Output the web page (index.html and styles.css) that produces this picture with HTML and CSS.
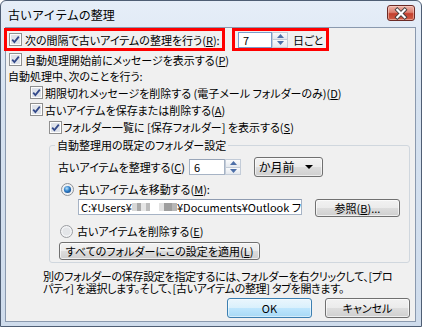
FILE: index.html
```html
<!DOCTYPE html>
<html lang="ja">
<head>
<meta charset="utf-8">
<link rel="stylesheet" href="styles.css">
</head>
<body>
<div class="window">
  <div class="titlebar">
    <span class="title">古いアイテムの整理</span>
    <div class="close">
      <svg width="28" height="15" viewBox="0 0 28 15">
        <path d="M10 3.5 L18 11.5 M18 3.5 L10 11.5" stroke="#3a3a3a" stroke-width="4.2" stroke-linecap="square"/>
        <path d="M10 3.5 L18 11.5 M18 3.5 L10 11.5" stroke="#ffffff" stroke-width="2.4" stroke-linecap="square"/>
      </svg>
    </div>
  </div>
  <div class="client">
    <div class="row-top">
      <div class="hl hl-check">
        <span class="cb"><svg width="13" height="13" viewBox="0 0 13 13"><rect x=".5" y=".5" width="12" height="12" fill="#fdfdfd" stroke="#8f8f8f"/><rect x="2" y="2" width="9" height="9" fill="#dfe3ea"/><path d="M3.2 6.6 L5.4 9 L9.8 3.6" fill="none" stroke="#33498a" stroke-width="1.8"/></svg></span>
        <span class="txt">次の間隔で古いアイテムの整理を行う(<u>R</u>):</span>
      </div>
      <div class="hl hl-spin">
        <div class="spin">
          <span class="field focus w-7">7</span>
          <span class="spinbtns">
            <span class="sb"><svg width="7" height="4" viewBox="0 0 7 4"><path d="M0 4 L3.5 0 L7 4Z" fill="#4d6fa8"/></svg></span>
            <span class="sb"><svg width="7" height="4" viewBox="0 0 7 4"><path d="M0 0 L3.5 4 L7 0Z" fill="#4d6fa8"/></svg></span>
          </span>
        </div>
        <span class="unit">日ごと</span>
      </div>
    </div>

    <div class="row r2">
      <span class="cb"><svg width="13" height="13" viewBox="0 0 13 13"><rect x=".5" y=".5" width="12" height="12" fill="#fdfdfd" stroke="#8f8f8f"/><rect x="2" y="2" width="9" height="9" fill="#dfe3ea"/><path d="M3.2 6.6 L5.4 9 L9.8 3.6" fill="none" stroke="#33498a" stroke-width="1.8"/></svg></span>
      <span class="txt">自動処理開始前にメッセージを表示する(<u>P</u>)</span>
    </div>
    <div class="row r3"><span class="txt">自動処理中、次のことを行う:</span></div>
    <div class="row r4">
      <span class="cb"><svg width="13" height="13" viewBox="0 0 13 13"><rect x=".5" y=".5" width="12" height="12" fill="#fdfdfd" stroke="#8f8f8f"/><rect x="2" y="2" width="9" height="9" fill="#dfe3ea"/><path d="M3.2 6.6 L5.4 9 L9.8 3.6" fill="none" stroke="#33498a" stroke-width="1.8"/></svg></span>
      <span class="txt">期限切れメッセージを削除する (電子メール フォルダーのみ)(<u>D</u>)</span>
    </div>
    <div class="row r5">
      <span class="cb"><svg width="13" height="13" viewBox="0 0 13 13"><rect x=".5" y=".5" width="12" height="12" fill="#fdfdfd" stroke="#8f8f8f"/><rect x="2" y="2" width="9" height="9" fill="#dfe3ea"/><path d="M3.2 6.6 L5.4 9 L9.8 3.6" fill="none" stroke="#33498a" stroke-width="1.8"/></svg></span>
      <span class="txt">古いアイテムを保存または削除する(<u>A</u>)</span>
    </div>
    <div class="row r6">
      <span class="cb"><svg width="13" height="13" viewBox="0 0 13 13"><rect x=".5" y=".5" width="12" height="12" fill="#fdfdfd" stroke="#8f8f8f"/><rect x="2" y="2" width="9" height="9" fill="#dfe3ea"/><path d="M3.2 6.6 L5.4 9 L9.8 3.6" fill="none" stroke="#33498a" stroke-width="1.8"/></svg></span>
      <span class="txt">フォルダー一覧に [保存フォルダー] を表示する(<u>S</u>)</span>
    </div>

    <fieldset class="group">
      <legend>自動整理用の既定のフォルダー設定</legend>
      <div class="grow g-age">
        <span class="lbl">古いアイテムを整理する(<u>C</u>)</span>
        <div class="spin">
          <span class="field w-6">6</span>
          <span class="spinbtns">
            <span class="sb"><svg width="7" height="4" viewBox="0 0 7 4"><path d="M0 4 L3.5 0 L7 4Z" fill="#4d6fa8"/></svg></span>
            <span class="sb"><svg width="7" height="4" viewBox="0 0 7 4"><path d="M0 0 L3.5 4 L7 0Z" fill="#4d6fa8"/></svg></span>
          </span>
        </div>
        <div class="combo">
          <span>か月前</span>
          <svg width="8" height="4" viewBox="0 0 8 4"><path d="M0 0 L8 0 L4 4Z" fill="#000"/></svg>
        </div>
      </div>
      <div class="grow g-radio1">
        <span class="radio"><svg width="13" height="13" viewBox="0 0 13 13"><defs><radialGradient id="rdot" cx="40%" cy="35%" r="70%"><stop offset="0" stop-color="#b9e3fb"/><stop offset=".55" stop-color="#2f7fc9"/><stop offset="1" stop-color="#1a4f8f"/></radialGradient></defs><circle cx="6.5" cy="6.5" r="6" fill="#eef0f3" stroke="#8f9296"/><circle cx="6.5" cy="6.5" r="3.6" fill="url(#rdot)"/></svg></span>
        <span class="txt">古いアイテムを移動する(<u>M</u>):</span>
      </div>
      <div class="grow g-path">
        <div class="path">C:¥Users¥<span class="blur b1"></span><span class="blur b2"></span>¥Documents¥Outlook フ</div>
        <button class="btn browse">参照(<u>B</u>)...</button>
      </div>
      <div class="grow g-radio2">
        <span class="radio"><svg width="13" height="13" viewBox="0 0 13 13"><circle cx="6.5" cy="6.5" r="6" fill="#f3f4f6" stroke="#9a9ca0"/><circle cx="6.5" cy="6.5" r="4" fill="#e3e5e8"/></svg></span>
        <span class="txt">古いアイテムを削除する(<u>E</u>)</span>
      </div>
      <div class="grow g-btn">
        <button class="btn applyall">すべてのフォルダーにこの設定を適用(<u>L</u>)</button>
      </div>
    </fieldset>

    <p class="note">別のフォルダーの保存設定を指定するには、フォルダーを右クリックして、[プロ<br>パティ] を選択します。そして、[古いアイテムの整理] タブを開きます。</p>

    <div class="actions">
      <button class="btn default">OK</button>
      <button class="btn">キャンセル</button>
    </div>
  </div>
</div>
</body>
</html>
```

FILE: styles.css
```css
* { box-sizing: border-box; }
html, body { margin: 0; padding: 0; }
body {
  width: 422px;
  height: 327px;
  overflow: hidden;
  background: #fff;
  font-family: "Noto Sans CJK JP", "Noto Sans", sans-serif;
  font-size: 11px;
  color: #000;
}
u { text-decoration: underline; text-underline-offset: 1px; }

.window {
  width: 422px;
  height: 327px;
  border: 1px solid #4f5e74;
  border-radius: 6px 6px 0 0;
  background: linear-gradient(#e6eef8 0%, #d6e2f0 30%, #cfdcec 100%);
  display: flex;
  flex-direction: column;
}

.titlebar {
  height: 26px;
  flex: none;
  display: flex;
  align-items: flex-start;
  justify-content: space-between;
  padding: 0 6px 0 7px;
}
.title {
  font-size: 12px;
  line-height: 14px;
  margin-top: 7px;
  color: #000;
}
.close {
  margin-top: 4px;
  width: 28px;
  height: 16px;
  border: 1px solid #6b2a26;
  border-radius: 3px;
  background: linear-gradient(#edb3a8 0%, #dd8070 45%, #c3402d 55%, #cf5d45 100%);
  box-shadow: inset 0 0 0 1px rgba(255,220,210,.5);
  display: flex;
  align-items: center;
  justify-content: center;
}
.close svg { display: block; }

.client {
  margin: 0 5px 0 4px;
  height: 295px;
  border: 1px solid #8a99ae;
  background: #f0f0f0;
  display: flex;
  flex-direction: column;
  font-feature-settings: "palt";
  line-height: 14px;
  white-space: nowrap;
}

.cb, .radio { display: block; width: 13px; height: 13px; flex: none; }
.cb svg, .radio svg { display: block; }

/* top row with red annotation boxes */
.row-top { display: flex; height: 23px; margin-left: -2px; }
.hl {
  border: 3px solid #ff0000;
  height: 23px;
  display: flex;
  align-items: center;
}
.hl-check { width: 221px; padding-left: 2px; gap: 3px; }
.hl-spin { width: 97px; margin-left: 7px; padding-left: 3px; }
.unit { margin-left: 5px; }

.spin { display: flex; height: 16px; }
.field {
  display: block;
  height: 16px;
  border: 1px solid #a6b3c5;
  border-top-color: #98a5b8;
  background: #fff;
  padding-left: 4px;
  line-height: 14px;
  font-size: 11px;
}
.field.focus { border-color: #7a9dcb; }
.w-7 { width: 34px; }
.w-6 { width: 36px; }
.spinbtns {
  width: 16px;
  height: 16px;
  display: flex;
  flex-direction: column;
  border: 1px solid #c3ccd8;
  background: #eef1f5;
}
.sb {
  flex: 1;
  display: flex;
  align-items: center;
  justify-content: center;
  background: linear-gradient(#fafbfc, #e4e8ee);
}
.sb + .sb { border-top: 1px solid #c3ccd8; }
.sb svg { display: block; }

.row { display: flex; align-items: center; gap: 3px; }
.r2 { height: 17px; padding-left: 3px; }
.r3 { height: 16px; padding-left: 2px; }
.r4 { height: 17px; padding-left: 24px; gap: 2px; }
.r5 { height: 17px; padding-left: 24px; gap: 2px; }
.r6 { height: 18px; padding-left: 43px; gap: 1px; }

.group {
  margin: 2px 5px 0 43px;
  padding: 0 0 2px 0;
  width: 361px;
  border: 1px solid #d0d7de;
  border-radius: 3px;
  min-inline-size: 0;
}
.group legend {
  margin-left: 5px;
  padding: 0 2px;
  line-height: 14px;
  height: 14px;
}
.grow { display: flex; align-items: center; }
.g-age { height: 20px; margin-top: 5px; padding-left: 8px; }
.lbl { width: 131px; }
.combo {
  margin-left: 13px;
  width: 69px;
  height: 20px;
  border: 1px solid #707070;
  border-radius: 3px;
  background: linear-gradient(#f2f2f2 0%, #ebebeb 50%, #dddddd 51%, #cfcfcf 100%);
  box-shadow: inset 0 0 0 1px rgba(255,255,255,.6);
  display: flex;
  align-items: center;
  justify-content: space-between;
  padding: 0 9px 0 4px;
  font-size: 12px;
}
.combo svg { display: block; }

.g-radio1 { height: 16px; margin-top: 4px; padding-left: 11px; gap: 4px; }
.g-path { height: 18px; margin-top: 2px; padding-left: 28px; align-items: flex-start; }
.path {
  width: 224px;
  height: 16px;
  border: 1px solid #a6b3c5;
  border-top-color: #8e9bb0;
  background: #fff;
  padding-left: 2px;
  line-height: 14px;
  font-size: 11px;
  overflow: hidden;
  display: flex;
  align-items: center;
}
.blur { display: inline-block; height: 8px; }
.b1 { width: 20px; margin-right: 9px; background: linear-gradient(90deg, #d8d8d8 0 25%, #a9a9a9 25% 50%, #e6e6e6 50% 75%, #bcbcbc 75%); }
.b2 { width: 20px; background: linear-gradient(90deg, #e2e2e2 0 30%, #9e9e9e 30% 70%, #b6b6b6 70%); }

.btn {
  font: inherit;
  font-feature-settings: "palt";
  color: #000;
  padding: 0;
  border: 1px solid #707070;
  border-radius: 3px;
  background: linear-gradient(#f2f2f2 0%, #ebebeb 50%, #dddddd 51%, #cfcfcf 100%);
  box-shadow: inset 0 0 0 1px rgba(255,255,255,.65);
  line-height: 14px;
  white-space: nowrap;
}
.browse { margin-left: 13px; width: 85px; height: 18px; }
.g-radio2 { height: 16px; margin-top: 6px; padding-left: 10px; gap: 4px; }
.g-btn { height: 18px; margin-top: 3px; padding-left: 9px; }
.applyall { width: 201px; height: 18px; }

.note {
  margin: 7px 0 0 37px;
  line-height: 12px;
  font-size: 11px;
  letter-spacing: -0.3px;
}

.actions {
  display: flex;
  justify-content: flex-end;
  gap: 13px;
  margin: 4px 5px 0 0;
}
.actions .btn { width: 85px; height: 20px; }
.btn.default {
  border-color: #3c7fb1;
  background: linear-gradient(#eaf6fd 0%, #d9f0fc 50%, #bee6fd 51%, #a7d9f5 100%);
  box-shadow: inset 0 0 0 1px rgba(255,255,255,.5);
}
```
